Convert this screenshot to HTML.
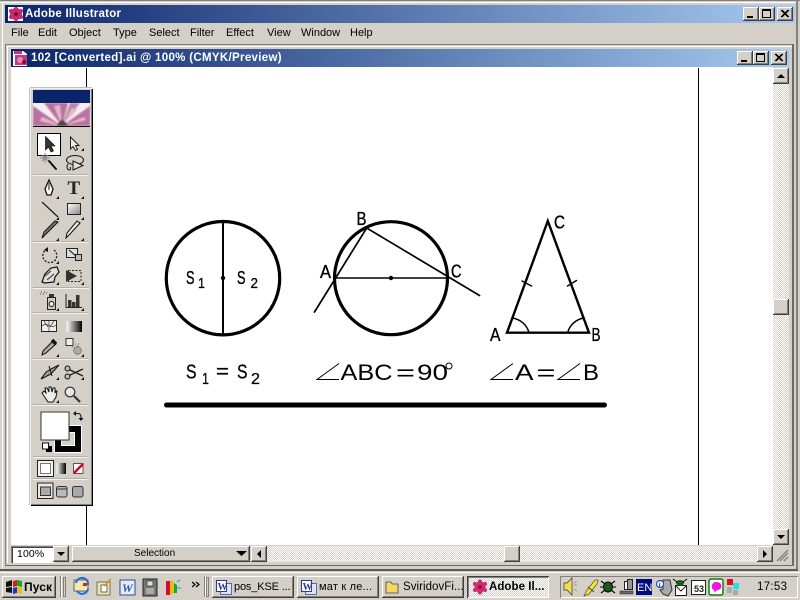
<!DOCTYPE html>
<html><head><meta charset="utf-8">
<style>
html,body{margin:0;padding:0;width:800px;height:600px;overflow:hidden;background:#d4d0c8}
body{position:relative;font-family:"Liberation Sans","DejaVu Sans",sans-serif;font-size:11px;color:#000}
.a{position:absolute;white-space:nowrap}
.b{position:absolute;box-sizing:border-box;background:#d4d0c8;box-shadow:inset -1px -1px 0 #404040,inset 1px 1px 0 #fff,inset -2px -2px 0 #808080}
.t{position:absolute;white-space:nowrap;line-height:13px}
.dith{position:absolute;background-color:#d4d0c8;background-image:conic-gradient(#fff 25%,#d4d0c8 0 50%,#fff 0 75%,#d4d0c8 0);background-size:2px 2px}
.grad{position:absolute;background:linear-gradient(90deg,#0a246a,#a6caf0)}
.sep{position:absolute;left:33px;width:56px;height:1px;background:#f4f2ee;border-top:1px solid #b4b0a8}
svg{position:absolute;left:0;top:0;overflow:visible}
.tb{position:absolute;box-sizing:border-box;height:22px;top:576px;width:82px;background:#d4d0c8;box-shadow:inset -1px -1px 0 #404040,inset 1px 1px 0 #fff,inset -2px -2px 0 #808080}
</style></head><body>

<!-- main window frame -->
<div class="a" style="left:0;top:0;width:800px;height:1px;background:#808080"></div>
<div class="a" style="left:0;top:2px;width:796px;height:1px;background:#fff"></div>
<div class="a" style="left:2px;top:2px;width:1px;height:568px;background:#fff"></div>
<div class="a" style="left:796px;top:0;width:2px;height:571px;background:#808080"></div>
<div class="a" style="left:0;top:569px;width:798px;height:2px;background:#5a5a5a"></div>

<!-- title -->
<div class="grad" style="left:5px;top:5px;width:790px;height:18px"></div>
<div class="t" style="left:25px;top:8px;color:#fff;font-weight:bold;font-size:11.5px;letter-spacing:.25px">Adobe Illustrator</div>
<svg width="800" height="600">
<rect x="8" y="7" width="15" height="14" fill="#fff"/>
<g fill="#c8286e"><circle cx="16" cy="14" r="6"/><circle cx="11" cy="11" r="2"/><circle cx="21" cy="11" r="2"/><circle cx="11" cy="17" r="2"/><circle cx="21" cy="17" r="2"/><circle cx="16" cy="9" r="2"/><circle cx="16" cy="19" r="2"/></g>
<circle cx="16" cy="14" r="2" fill="#7a1040"/>
</svg>
<div class="b" style="left:743px;top:7px;width:16px;height:14px"><div class="a" style="left:4px;top:9px;width:6px;height:2px;background:#000"></div></div>
<div class="b" style="left:759px;top:7px;width:16px;height:14px"><div class="a" style="left:3px;top:2px;width:9px;height:9px;box-sizing:border-box;border:1px solid #000;border-top-width:2px"></div></div>
<div class="b" style="left:777px;top:7px;width:16px;height:14px"><svg width="16" height="14"><path d="M4 3l7 7M5 3l7 7M11 3l-7 7M12 3l-7 7" stroke="#000" stroke-width="1" fill="none"/></svg></div>

<!-- menu -->
<div class="t" style="left:11px;top:27px">File</div>
<div class="t" style="left:38px;top:27px">Edit</div>
<div class="t" style="left:69px;top:27px">Object</div>
<div class="t" style="left:113px;top:27px">Type</div>
<div class="t" style="left:149px;top:27px">Select</div>
<div class="t" style="left:190px;top:27px">Filter</div>
<div class="t" style="left:226px;top:27px">Effect</div>
<div class="t" style="left:267px;top:27px">View</div>
<div class="t" style="left:301px;top:27px">Window</div>
<div class="t" style="left:350px;top:27px">Help</div>

<!-- doc window frame -->
<div class="a" style="left:5px;top:44px;width:789px;height:1px;background:#808080"></div>
<div class="a" style="left:5px;top:44px;width:1px;height:521px;background:#808080"></div>
<div class="a" style="left:7px;top:46px;width:785px;height:1px;background:#fff"></div>
<div class="a" style="left:7px;top:46px;width:1px;height:517px;background:#fff"></div>
<div class="a" style="left:792px;top:44px;width:2px;height:522px;background:#6a6a6a"></div>
<div class="a" style="left:5px;top:565px;width:789px;height:1px;background:#6a6a6a"></div>

<div class="grad" style="left:11px;top:49px;width:778px;height:18px"></div>
<div class="t" style="left:31px;top:52px;color:#fff;font-weight:bold;font-size:11.5px;letter-spacing:.32px">102 [Converted].ai @ 100% (CMYK/Preview)</div>
<svg width="800" height="600">
<path d="M13 51h10l4 3v12h-14z" fill="#fff"/>
<rect x="14" y="51" width="8" height="3" fill="#d0307a"/>
<rect x="15" y="55" width="12" height="10" fill="#c43a7c"/>
<circle cx="20" cy="60" r="3" fill="#e88ab4"/><circle cx="24" cy="62" r="2" fill="#7a1040"/>
</svg>
<div class="b" style="left:737px;top:51px;width:16px;height:14px"><div class="a" style="left:4px;top:9px;width:6px;height:2px;background:#000"></div></div>
<div class="b" style="left:753px;top:51px;width:16px;height:14px"><div class="a" style="left:3px;top:2px;width:9px;height:9px;box-sizing:border-box;border:1px solid #000;border-top-width:2px"></div></div>
<div class="b" style="left:771px;top:51px;width:16px;height:14px"><svg width="16" height="14"><path d="M4 3l7 7M5 3l7 7M11 3l-7 7M12 3l-7 7" stroke="#000" stroke-width="1" fill="none"/></svg></div>

<!-- canvas -->
<div class="a" style="left:11px;top:67px;width:762px;height:478px;background:#fff"></div>
<div class="a" style="left:86px;top:68px;width:1px;height:477px;background:#000"></div>
<div class="a" style="left:698px;top:68px;width:1px;height:477px;background:#000"></div>

<!-- artwork -->
<svg width="800" height="600" font-family="'Liberation Sans',sans-serif" fill="#000">
<g fill="none" stroke="#000" stroke-linecap="round">
<circle cx="223" cy="278.2" r="56.7" stroke-width="3.2"/>
<path d="M223 222V335" stroke-width="2"/>
<circle cx="391" cy="278.2" r="56.5" stroke-width="3.2"/>
<path d="M334 278H448" stroke-width="1.600"/>
<path d="M314.5 312L366.7 228L479.5 295.5" stroke-width="1.700"/>
<path d="M507 332.7L547.8 221L589 332.7Z" stroke-width="2.400" stroke-linejoin="miter"/>
<path d="M522 281L531.5 286M567.5 286L576.5 280.5" stroke-width="1.500"/>
<path d="M529 332.5A20 20 0 0 0 512 318M567.7 332.5A20 20 0 0 1 584 318" stroke-width="1.500"/>
<path d="M166.5 405H604.5" stroke-width="5"/>
<path d="M339 363.5L317 379.5H339M513 363.5L491 379.5H513M580 363.5L558 379.5H580" stroke-width="1" stroke-linecap="butt"/>
<circle cx="449" cy="366" r="3" stroke-width="1"/>
</g>
<circle cx="223" cy="278" r="2.200"/><circle cx="391" cy="278" r="2.200"/>
<g font-size="18" stroke="#000" stroke-width=".35">
<text x="186" y="284" textLength="8.500" lengthAdjust="spacingAndGlyphs">S</text>
<text x="237" y="284" textLength="8.500" lengthAdjust="spacingAndGlyphs">S</text>
<text x="356.500" y="225" textLength="10" lengthAdjust="spacingAndGlyphs">B</text>
<text x="320" y="278" textLength="11" lengthAdjust="spacingAndGlyphs">A</text>
<text x="451" y="277.500" textLength="10.500" lengthAdjust="spacingAndGlyphs">C</text>
<text x="554" y="228.500" textLength="11" lengthAdjust="spacingAndGlyphs">C</text>
<text x="490" y="341" textLength="10.500" lengthAdjust="spacingAndGlyphs">A</text>
<text x="591.500" y="341" textLength="9" lengthAdjust="spacingAndGlyphs">B</text>
</g>
<g font-size="15" stroke="#000" stroke-width=".25">
<text x="198" y="288" textLength="7" lengthAdjust="spacingAndGlyphs">1</text>
<text x="250.500" y="288" textLength="7.500" lengthAdjust="spacingAndGlyphs">2</text>
</g>
<g font-size="20.500" stroke="#000" stroke-width=".3">
<text x="186" y="378.500" textLength="10.500" lengthAdjust="spacingAndGlyphs">S</text>
<text x="216" y="378" textLength="13" lengthAdjust="spacingAndGlyphs">=</text>
<text x="237" y="378.500" textLength="10.500" lengthAdjust="spacingAndGlyphs">S</text>
</g>
<g font-size="16" stroke="#000" stroke-width=".25">
<text x="202" y="384" textLength="7" lengthAdjust="spacingAndGlyphs">1</text>
<text x="251" y="384" textLength="9" lengthAdjust="spacingAndGlyphs">2</text>
</g>
<g font-size="22.500">
<text x="340.500" y="380" textLength="52" lengthAdjust="spacingAndGlyphs">ABC</text>
<text x="396" y="380" textLength="19" lengthAdjust="spacingAndGlyphs">=</text>
<text x="417" y="380" textLength="31" lengthAdjust="spacingAndGlyphs">90</text>
<text x="515" y="380" textLength="18.500" lengthAdjust="spacingAndGlyphs">A</text>
<text x="536.500" y="380" textLength="19" lengthAdjust="spacingAndGlyphs">=</text>
<text x="583" y="380" textLength="16" lengthAdjust="spacingAndGlyphs">B</text>
</g>
</svg>

<!-- right scrollbar -->
<div class="dith" style="left:773px;top:84px;width:16px;height:445px"></div>
<div class="b" style="left:773px;top:68px;width:16px;height:16px"><svg width="16" height="16"><path d="M4 10h8l-4-4z" fill="#000"/></svg></div>
<div class="b" style="left:773px;top:299px;width:16px;height:16px"></div>
<div class="b" style="left:773px;top:529px;width:16px;height:16px"><svg width="16" height="16"><path d="M4 6h8l-4 4z" fill="#000"/></svg></div>

<!-- status -->
<div class="a" style="left:11px;top:545px;width:778px;height:18px;background:#d4d0c8"></div>
<div class="a" style="left:11px;top:546px;width:44px;height:17px;box-sizing:border-box;background:#fff;box-shadow:inset 1px 1px 0 #808080,inset 2px 2px 0 #404040"></div>
<div class="t" style="left:17px;top:548px;font-size:10.5px;letter-spacing:.1px">100%</div>
<div class="b" style="left:53px;top:546px;width:16px;height:16px"><svg width="16" height="16"><path d="M4 6h8l-4 4z" fill="#000"/></svg></div>
<div class="b" style="left:72px;top:546px;width:178px;height:16px"></div>
<div class="t" style="left:134px;top:547px;font-size:10px">Selection</div>
<svg width="800" height="600"><path d="M236 551h11l-5.500 5z" fill="#000"/></svg>
<div class="dith" style="left:267px;top:546px;width:490px;height:16px"></div>
<div class="b" style="left:251px;top:546px;width:16px;height:16px"><svg width="16" height="16"><path d="M10 4v8l-4-4z" fill="#000"/></svg></div>
<div class="b" style="left:504px;top:546px;width:16px;height:16px"></div>
<div class="b" style="left:757px;top:546px;width:16px;height:16px"><svg width="16" height="16"><path d="M6 4v8l4-4z" fill="#000"/></svg></div>
<svg width="800" height="600"><path d="M777 561l11-11M780 561l8-8M784 561l4-4" stroke="#808080" stroke-width="1.300" fill="none"/></svg>

<!-- toolbox -->
<div class="a" style="left:30px;top:88px;width:62px;height:417px;box-sizing:border-box;background:#d4d0c8;box-shadow:inset 1px 1px 0 #f4f2ee,1px 1px 0 #000,-1px 0 0 #c0c0c0,0 -1px 0 #c0c0c0,inset -1px -1px 0 #808080"></div>
<div class="a" style="left:33px;top:90px;width:57px;height:13px;background:#0a246a"></div>
<svg width="800" height="600">
<defs>
<filter id="bl" x="-5%" y="-5%" width="110%" height="110%"><feGaussianBlur stdDeviation=".7"/></filter>
<clipPath id="fc"><rect x="33" y="103" width="57" height="23"/></clipPath>
<linearGradient id="g1" x1="0" y1="0" x2="1" y2="1"><stop offset="0" stop-color="#fff"/><stop offset="1" stop-color="#888"/></linearGradient>
<linearGradient id="g2" x1="0" x2="1"><stop offset="0" stop-color="#fff"/><stop offset="1" stop-color="#000"/></linearGradient>
</defs>
<rect x="33" y="103" width="57" height="23" fill="#f4eef2"/>
<g clip-path="url(#fc)"><g filter="url(#bl)">
<path d="M62 126L33 106V126Z" fill="#b9719f"/>
<path d="M62 126L44 103H68Z" fill="#b9719f"/>
<path d="M62 126L70 103H80Z" fill="#c184ab"/>
<path d="M62 126L90 106V126Z" fill="#b9719f"/>
<path d="M62 126L54 106L60 105Z" fill="#e4b8cc"/>
<path d="M62 126L72 108L77 110Z" fill="#e4b8cc"/>
<path d="M62 126L42 117L40 121Z" fill="#e4b8cc"/>
<path d="M62 126L84 117L86 120Z" fill="#e4b8cc"/>
<path d="M56 126L62 119L69 126Z" fill="#5a4040"/>
</g></g>
<rect x="33" y="126" width="57" height="1" fill="#000"/>
<!-- select box -->
<rect x="37.500" y="133.500" width="23" height="22" fill="#fff" stroke="#000"/>
<path d="M45.500 136.500V150L48.500 147L51 152L53.500 151L51 146H55Z" fill="#333" stroke="#000" stroke-width=".6"/>
<path d="M70.500 137V149L73 146.500L75.500 150.500L77.500 149.500L75.500 145.500H79Z" fill="#eee" stroke="#222"/>
<!-- wand, lasso -->
<path d="M49 161L56 169" stroke="#111" stroke-width="2" stroke-linecap="round"/>
<path d="M45 153v10M40 158h10M42 155l6 6M48 155l-6 6" stroke="#888" stroke-width="1"/>
<ellipse cx="75" cy="160" rx="8.500" ry="4.500" fill="none" stroke="#222" stroke-width="1.100"/>
<path d="M68 164c-1.500 2-1.500 5 1 6c2 0 2-2 1-3" fill="none" stroke="#222" stroke-width="1.100"/>
<path d="M73 161V170L83 165.500Z" fill="#e0e0e0" stroke="#111"/>
<!-- pen + T -->
<path d="M49 180L53 189L51 195H47L45 189Z" fill="#fff" stroke="#111" stroke-width="1.300"/>
<path d="M49 183V190" stroke="#111"/>
<text x="67.500" y="194" font-family="'Liberation Serif',serif" font-size="19" font-weight="bold" fill="#222">T</text>
<path d="M42 202L58 217" stroke="#222" stroke-width="1.300"/>
<rect x="67.500" y="203.500" width="13" height="11" fill="url(#g1)" stroke="#222"/>
<!-- brush pencil -->
<path d="M58 222L47 233L42 238L44 232L55 221Z" fill="#777" stroke="#111"/>
<path d="M80 223L70 234L66 238L67 233L77 221Z" fill="#eee" stroke="#111"/>
<!-- rotate, scale -->
<path d="M54 250a7 7 0 1 1-9 .5" fill="none" stroke="#222" stroke-width="1.400" stroke-dasharray="2 1.500"/>
<path d="M48 247l-4 3 4 2z" fill="#111"/>
<rect x="66.500" y="248.500" width="11" height="9" fill="#ddd" stroke="#222"/>
<rect x="75.500" y="254.500" width="6" height="6" fill="#bbb" stroke="#222"/>
<path d="M69 250l7 6" stroke="#111"/>
<!-- warp, free -->
<path d="M42 282l3-8 6-6 6-1 2 5-4 5-1 5-9 1z" fill="#ddd" stroke="#111" stroke-width="1.200"/>
<path d="M45 276l6-5M47 280l7-6" stroke="#333"/>
<rect x="68.500" y="270.500" width="12.500" height="11" fill="none" stroke="#222" stroke-dasharray="2 1.500"/>
<path d="M66 270L77 276L66 282Z" fill="#333"/>
<!-- symbol sprayer, graph -->
<rect x="47.500" y="297.500" width="8" height="12" fill="#ccc" stroke="#222"/>
<circle cx="51.500" cy="304" r="2.500" fill="#eee" stroke="#111"/>
<rect x="49" y="294" width="5" height="3" fill="#333"/>
<path d="M40 294h1M43 294h1M41 292h1M44 292h1M46 293h1" stroke="#444"/>
<path d="M66 294V307.500H82" fill="none" stroke="#222"/>
<rect x="68" y="300" width="3.500" height="7" fill="#333"/><rect x="72" y="302" width="3.500" height="5" fill="#333"/><rect x="76" y="295" width="3.500" height="12" fill="#333"/>
<!-- mesh, gradient -->
<rect x="41.500" y="320.500" width="15" height="11" fill="#eee" stroke="#222"/>
<path d="M42 326c5-5 9 4 14-1M49 321v10M44 321l4 6M54 321l-4 6" fill="none" stroke="#444" stroke-width=".8"/>
<rect x="66.500" y="321" width="15.500" height="11" fill="url(#g2)"/>
<!-- eyedropper, blend -->
<path d="M53 341L56 344L46 353L42 355L43 351Z" fill="#aaa" stroke="#111"/>
<path d="M52 340l4 4" stroke="#111" stroke-width="3.500"/>
<rect x="66" y="338.500" width="7" height="7" fill="#eee" stroke="#333"/>
<circle cx="77.500" cy="350.500" r="3.800" fill="#aaa" stroke="#555" stroke-width=".6"/>
<path d="M75 344h1M77 346h1M74 348h1M72 347h1M78 344h1" stroke="#666"/>
<!-- slice, scissors -->
<path d="M59 365L51 374L41 379L46 372L53 368Z" fill="#999" stroke="#111"/>
<path d="M49 366L52 376" stroke="#111"/>
<path d="M68 369L83 376M68 376L83 369" stroke="#222" stroke-width="1.300"/>
<circle cx="67.500" cy="368.500" r="2.500" fill="#bbb" stroke="#111"/>
<circle cx="67.500" cy="376.500" r="2.500" fill="#bbb" stroke="#111"/>
<!-- hand, zoom -->
<path d="M42 393l2-2 2 2-1-5 2 0 2 4 0-5 2 0 1 5 1-4 2 0 0 5 1-2 1 0-1 6-3 5h-5z" fill="#eee" stroke="#111"/>
<circle cx="70" cy="392" r="4.800" fill="#e8e8e8" stroke="#333" stroke-width="1.200"/>
<path d="M74 396l6 6" stroke="#333" stroke-width="2.200"/>
<!-- colors -->
<rect x="54" y="425" width="28" height="28" fill="#fff"/>
<rect x="55" y="426" width="26" height="26" fill="#000"/>
<rect x="61.500" y="432.500" width="13" height="13" fill="#d4d0c8" stroke="#fff"/>
<rect x="41" y="412" width="28" height="28" fill="#fff" stroke="#333"/>
<path d="M75 413.500h3a3 3 0 0 1 3 3v2" fill="none" stroke="#111" stroke-width="1.100"/>
<path d="M76 411v5l-3-2.500zM78.500 418h5l-2.500 3z" fill="#111"/>
<rect x="46" y="446" width="6" height="6" fill="#000"/>
<rect x="42.500" y="443" width="6" height="6" fill="#fff" stroke="#111"/>
<!-- modes -->
<rect x="37.500" y="460.500" width="16" height="16" fill="#f4f4f0" stroke="#222"/>
<rect x="40.500" y="463.500" width="10" height="10" fill="#fff" stroke="#777"/>
<rect x="56.500" y="463" width="9.500" height="11" fill="url(#g2)"/>
<rect x="73.500" y="463.500" width="9.500" height="10" fill="#fff" stroke="#555"/>
<path d="M74 473L83 464" stroke="#e00020" stroke-width="2.500"/>
<!-- screen modes -->
<rect x="37.500" y="483" width="15.500" height="15.500" fill="#e8e6e0" stroke="#222"/>
<rect x="40.500" y="487" width="10" height="8.500" fill="#aaa" stroke="#333"/>
<rect x="56.500" y="486.500" width="10.500" height="10.500" rx="2" fill="#bbb" stroke="#333"/>
<path d="M57 489h10" stroke="#333"/>
<rect x="72.500" y="486.500" width="10.500" height="10.500" rx="2" fill="#aaa" stroke="#333"/>
<!-- flyout triangles -->
<g fill="#111">
<path d="M84 148v3h-3zM59 196v3h-3zM84 196v3h-3zM59 217v3h-3zM84 217v3h-3zM59 238v3h-3zM84 238v3h-3zM59 261v3h-3zM59 282v3h-3zM84 282v3h-3zM59 308v3h-3zM84 308v3h-3zM59 354v3h-3zM84 354v3h-3zM59 377v3h-3zM84 377v3h-3zM59 400v3h-3z"/>
</g>
</svg>
<div class="sep" style="top:174px"></div>
<div class="sep" style="top:241px"></div>
<div class="sep" style="top:287px"></div>
<div class="sep" style="top:312px"></div>
<div class="sep" style="top:358px"></div>
<div class="sep" style="top:404px"></div>
<div class="sep" style="top:456px"></div>
<div class="sep" style="top:478px"></div>

<!-- taskbar -->
<div class="a" style="left:0;top:572px;width:800px;height:1px;background:#fff"></div>
<div class="tb" style="left:2px;width:54px"></div>
<div class="t" style="left:24px;top:581px;font-weight:bold;font-size:12px;letter-spacing:.1px">Пуск</div>
<div class="tb" style="left:212px"></div>
<div class="tb" style="left:297px"></div>
<div class="tb" style="left:382px"></div>
<div class="dith" style="left:467px;top:576px;width:82px;height:22px;box-shadow:inset 1px 1px 0 #404040,inset -1px -1px 0 #fff,inset 2px 2px 0 #808080"></div>
<svg width="800" height="600">
<path d="M6 582l6-2v6l-6 1zM6 588l6-1v6l-6-1z" fill="#111"/>
<path d="M13 581l4-1v6l-4 1z" fill="#d02020"/><path d="M17 580l5 1v6l-5-1z" fill="#20a020"/>
<path d="M13 588l4-1v6l-4 1z" fill="#2030d0"/><path d="M17 587l5 1v6l-5-1z" fill="#e0c020"/>
<!-- separators -->
<path d="M60.500 576v21M204.500 576v21" stroke="#808080"/><path d="M61.500 576v21M205.500 576v21" stroke="#fff"/>
<rect x="63.500" y="577.500" width="2" height="19" fill="#d4d0c8" stroke="#808080"/>
<rect x="206.500" y="577.500" width="2" height="19" fill="#d4d0c8" stroke="#808080"/>
<!-- quick launch -->
<rect x="74" y="580" width="14" height="11" fill="#f4e8b0" stroke="#333" stroke-width=".7"/>
<path d="M76 583a6 6 0 0 1 12 2M88 589a6 6 0 0 1-11 2" stroke="#1a70e0" stroke-width="2" fill="none"/>
<rect x="83" y="583" width="4" height="3" fill="#e02020"/>
<rect x="97" y="582" width="13" height="13" fill="#f0e4a8" stroke="#444" stroke-width=".7"/>
<rect x="101" y="585" width="6" height="7" fill="#fff" stroke="#333" stroke-width=".7"/>
<path d="M104 586l7-7" stroke="#c09020" stroke-width="1.500"/>
<rect x="120" y="580" width="15" height="15" fill="#e4ecf8" stroke="#2a4a9a"/>
<text x="122" y="592" font-family="'Liberation Serif',serif" font-style="italic" font-weight="bold" font-size="12" fill="#2a5ab0">W</text>
<rect x="143" y="579" width="14" height="17" fill="#777" stroke="#222"/>
<rect x="147" y="581" width="6" height="5" fill="#ddd" stroke="#222" stroke-width=".6"/>
<rect x="146" y="588" width="8" height="6" fill="#aaa"/>
<path d="M166 581h4v14h-4z" fill="#d01030"/><path d="M170 580l4 2v11l-4 2z" fill="#e0c010"/><path d="M174 583l3 2v8h-3z" fill="#20a040"/>
<path d="M177 582l3-2M177 588h4" stroke="#20b0c0" stroke-width="1.300"/>
<path d="M192 582l3 2.500-3 2.500M196 582l3 2.500-3 2.500" fill="none" stroke="#000" stroke-width="1.200"/>
<!-- word icons -->
<rect x="220.500" y="583.500" width="11" height="11" fill="#dce4f4" stroke="#5a6a9a"/>
<rect x="216.500" y="580.500" width="10" height="11" fill="#fff" stroke="#2a3a9a"/>
<text x="217.500" y="590" font-family="'Liberation Serif',serif" font-weight="bold" font-size="10" fill="#2a3a9a">W</text>
<rect x="305.500" y="583.500" width="11" height="11" fill="#dce4f4" stroke="#5a6a9a"/>
<rect x="301.500" y="580.500" width="10" height="11" fill="#fff" stroke="#2a3a9a"/>
<text x="302.500" y="590" font-family="'Liberation Serif',serif" font-weight="bold" font-size="10" fill="#2a3a9a">W</text>
<path d="M386 582h5l1 2h6v9h-12z" fill="#f4d860" stroke="#444" stroke-width=".8"/>
<g fill="#d02a70"><circle cx="480" cy="587" r="5.500"/><circle cx="475" cy="584" r="2"/><circle cx="485" cy="584" r="2"/><circle cx="475" cy="590" r="2"/><circle cx="485" cy="590" r="2"/><circle cx="480" cy="581.500" r="2"/><circle cx="480" cy="592.500" r="2"/></g>
<circle cx="480" cy="587" r="1.800" fill="#7a1040"/>
</svg>
<div class="t" style="left:234px;top:581px;font-size:11px;letter-spacing:-.15px">pos_KSE ...</div>
<div class="t" style="left:319px;top:581px;font-size:11px;letter-spacing:.2px">мат к ле...</div>
<div class="t" style="left:403px;top:581px;font-size:11.5px;letter-spacing:.05px">SviridovFi...</div>
<div class="t" style="left:489px;top:581px;font-size:11.5px;font-weight:bold;letter-spacing:.05px">Adobe Il...</div>

<!-- tray -->
<div class="a" style="left:560px;top:576px;width:238px;height:22px;box-sizing:border-box;box-shadow:inset 1px 1px 0 #808080,inset -1px -1px 0 #fff"></div>
<svg width="800" height="600">
<path d="M564 583h3l5-5v17l-5-5h-3z" fill="#f0e050" stroke="#333" stroke-width=".7"/>
<path d="M574 585h3M574 589l3 2M574 583l3-2" stroke="#999"/>
<path d="M584 596l3-6 8-10 3 0-1 4-8 10z" fill="#f4e820" stroke="#555" stroke-width=".8"/>
<path d="M588 587l6 5" stroke="#444"/>
<ellipse cx="608" cy="587" rx="4.500" ry="5" fill="#1a5a1a" stroke="#000"/>
<path d="M601 581l4 3M615 581l-4 3M600 587h4M616 587h-4M601 593l4-3M615 593l-4-3" stroke="#000" stroke-width="1.100"/>
<rect x="624.500" y="581.500" width="6" height="8" fill="#fff" stroke="#222"/>
<rect x="627.500" y="579.500" width="5" height="10" fill="#999" stroke="#222"/>
<rect x="620" y="591" width="13" height="3" fill="#666" stroke="#222" stroke-width=".5"/>
<rect x="636" y="579" width="16" height="16" fill="#000a80"/>
<text x="637" y="591" font-size="11" fill="#fff">EN</text>
<path d="M663 580h7l2 10-4 6-5-2-3-4 3-1z" fill="#aaa" stroke="#333"/>
<circle cx="660" cy="584" r="3.500" fill="#fff" stroke="#2030c0"/>
<text x="658.800" y="587" font-size="7" font-weight="bold" fill="#2030c0">i</text>
<rect x="675.500" y="585.500" width="11" height="10" fill="#fff" stroke="#222"/>
<path d="M676 586l5 5 5-5" fill="none" stroke="#222"/>
<ellipse cx="680" cy="583" rx="4" ry="3" fill="#1a5a1a"/>
<path d="M673 579l4 3M687 579l-4 3" stroke="#000"/>
<rect x="691.500" y="580.500" width="14" height="14" fill="#fff" stroke="#222"/>
<text x="694" y="592" font-size="9" font-weight="bold" fill="#222">53</text>
<rect x="709" y="579" width="14" height="16" rx="2" fill="#fff" stroke="#108010" stroke-width="1.500"/>
<path d="M716 582c5 0 6 3 5 6-1 2-4 2-5 3l-1 2-1-3c-2-1-3-3-2-5s2-3 4-3z" fill="#f018e0"/>
<rect x="727" y="579" width="6" height="6" fill="#e01010"/>
<rect x="733" y="583" width="6" height="6" fill="#20e0f0"/>
<path d="M727 587h5v6h-5zM733 590h5v5h-5z" fill="#aaa"/>
</svg>
<div class="t" style="left:757px;top:581px;font-size:11.5px;letter-spacing:.3px">17:53</div>
</body></html>
